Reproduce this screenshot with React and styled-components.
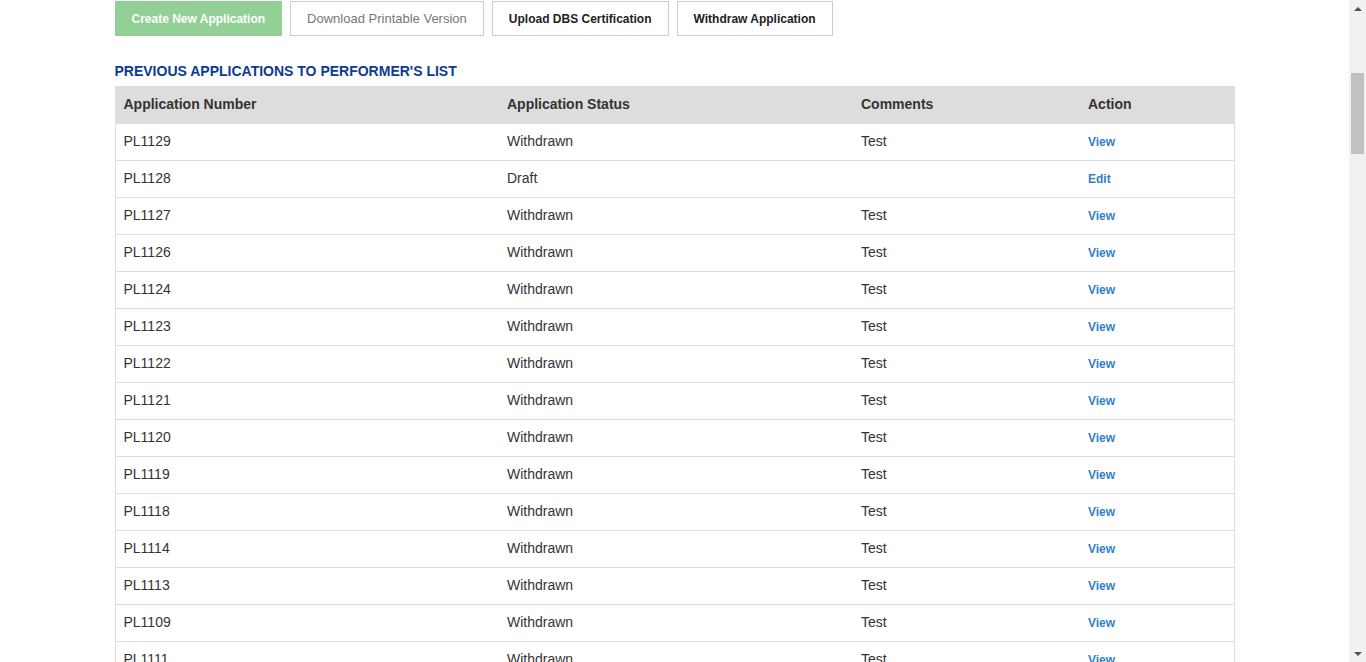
import React from "react";
import styled, { createGlobalStyle } from "styled-components";

const Global = createGlobalStyle`
  html, body { margin: 0; padding: 0; background: #fff; }
  body {
    font-family: "Liberation Sans", Arial, sans-serif;
    color: #333;
    font-size: 14px;
    line-height: 1.42857;
    padding-right: 17px;
  }
`;

const Page = styled.div`
  width: 1120px;
  margin: 0 auto;
  padding: 1px 0 40px;
`;

const Toolbar = styled.div`
  display: flex;
  gap: 8px;
`;

const Button = styled.button`
  height: 35px;
  padding: 0 16px;
  font-family: "Liberation Sans", Arial, sans-serif;
  font-size: ${p => (p.$muted ? "13px" : "12px")};
  font-weight: ${p => (p.$muted ? 400 : 700)};
  background: ${p => (p.$primary ? "#92d096" : "#fff")};
  color: ${p => (p.$primary ? "#fff" : p.$muted ? "#777" : "#222")};
  border: 1px solid ${p => (p.$primary ? "#92d096" : "#ccc")};
  border-radius: 0;
  cursor: pointer;
`;

const SectionTitle = styled.h2`
  margin: 27px 0 7px;
  font-size: 14px;
  line-height: 16px;
  font-weight: 700;
  color: #0c3b8f;
  text-transform: uppercase;
`;

const Table = styled.table`
  width: 1120px;
  border-collapse: collapse;
  table-layout: fixed;
  border-left: 1px solid #ddd;
  border-right: 1px solid #ddd;
`;

const Th = styled.th`
  background: #dddddd;
  text-align: left;
  font-weight: 700;
  font-size: 14px;
  color: #333;
  height: 37px;
  padding: 2px 8px 0;
  box-sizing: border-box;
`;

const Td = styled.td`
  height: 37px;
  padding: 0 8px;
  box-sizing: border-box;
  border-top: 1px solid #ddd;
  font-size: 14px;
  color: #333;
`;

const ActionLink = styled.a`
  font-size: 12px;
  font-weight: 700;
  color: #2f7fcb;
  text-decoration: none;
`;

/* window scrollbar as it appears in the reference */
const ScrollBar = styled.div`
  position: fixed;
  top: 0;
  right: 0;
  width: 17px;
  height: 100vh;
  background: #f1f1f1;
  display: flex;
  flex-direction: column;
`;

const ScrollArrow = styled.div`
  height: 17px;
  flex: none;
  display: flex;
  align-items: center;
  justify-content: center;
  &::before {
    content: "";
    width: 0;
    height: 0;
    border-left: 4px solid transparent;
    border-right: 4px solid transparent;
    ${p =>
      p.$down
        ? "border-top: 4px solid #505050;"
        : "border-bottom: 4px solid #505050;"}
  }
`;

const ScrollTrack = styled.div`
  flex: 1;
  padding: 56px 2px 0;
`;

const ScrollThumb = styled.div`
  height: 81px;
  background: #c1c1c1;
`;

const rows = [
  ["PL1129", "Withdrawn", "Test", "View"],
  ["PL1128", "Draft", "", "Edit"],
  ["PL1127", "Withdrawn", "Test", "View"],
  ["PL1126", "Withdrawn", "Test", "View"],
  ["PL1124", "Withdrawn", "Test", "View"],
  ["PL1123", "Withdrawn", "Test", "View"],
  ["PL1122", "Withdrawn", "Test", "View"],
  ["PL1121", "Withdrawn", "Test", "View"],
  ["PL1120", "Withdrawn", "Test", "View"],
  ["PL1119", "Withdrawn", "Test", "View"],
  ["PL1118", "Withdrawn", "Test", "View"],
  ["PL1114", "Withdrawn", "Test", "View"],
  ["PL1113", "Withdrawn", "Test", "View"],
  ["PL1109", "Withdrawn", "Test", "View"],
  ["PL1111", "Withdrawn", "Test", "View"],
  ["PL1110", "Withdrawn", "Test", "View"],
  ["PL1108", "Withdrawn", "Test", "View"],
];

export default function App() {
  return (
    <>
      <Global />
      <Page>
        <Toolbar>
          <Button $primary>Create New Application</Button>
          <Button $muted>Download Printable Version</Button>
          <Button>Upload DBS Certification</Button>
          <Button>Withdraw Application</Button>
        </Toolbar>
        <SectionTitle>Previous Applications to Performer's List</SectionTitle>
        <Table>
          <colgroup>
            <col style={{ width: 384 }} />
            <col style={{ width: 354 }} />
            <col style={{ width: 227 }} />
            <col />
          </colgroup>
          <thead>
            <tr>
              <Th>Application Number</Th>
              <Th>Application Status</Th>
              <Th>Comments</Th>
              <Th>Action</Th>
            </tr>
          </thead>
          <tbody>
            {rows.map(r => (
              <tr key={r[0]}>
                <Td>{r[0]}</Td>
                <Td>{r[1]}</Td>
                <Td>{r[2]}</Td>
                <Td>
                  <ActionLink href="#">{r[3]}</ActionLink>
                </Td>
              </tr>
            ))}
          </tbody>
        </Table>
      </Page>
      <ScrollBar aria-hidden="true">
        <ScrollArrow />
        <ScrollTrack>
          <ScrollThumb />
        </ScrollTrack>
        <ScrollArrow $down />
      </ScrollBar>
    </>
  );
}
